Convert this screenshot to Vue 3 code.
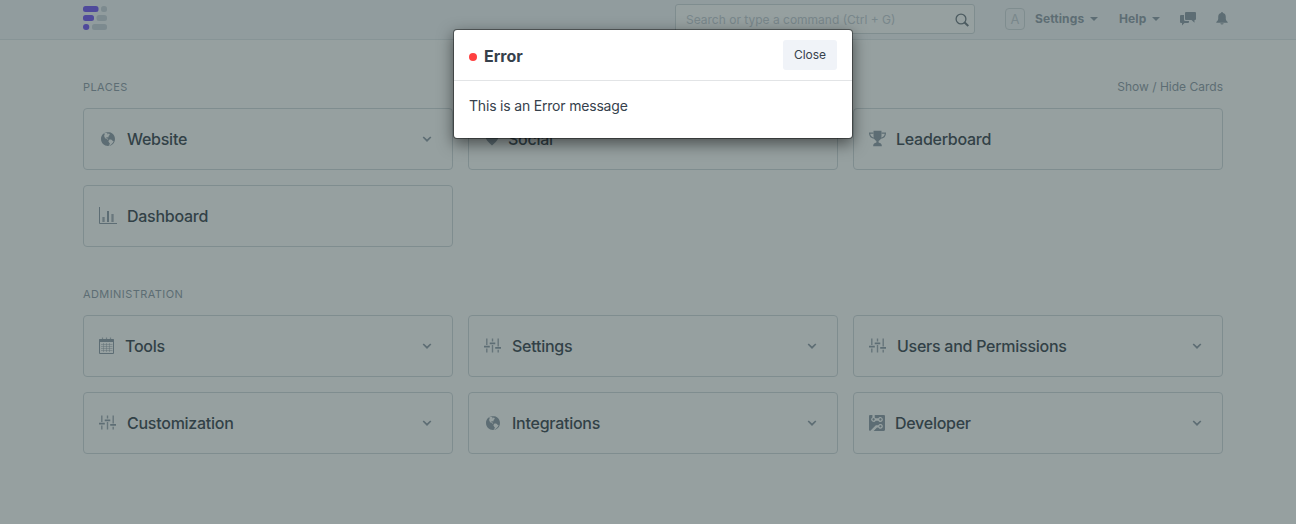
<script setup>
import { h } from 'vue'

const p = (d, extra = {}) => h('path', { d, ...extra })
const line = (d, w, o = 1) => p(d, { fill: 'none', stroke: 'currentColor', 'stroke-width': w, 'stroke-opacity': o })

const globe = 'M7 1C3.14 1 0 4.14 0 8s3.14 7 7 7c.48 0 .94-.05 1.38-.14-.17-.08-.2-.73-.02-1.09.19-.41.81-1.45.2-1.8-.61-.35-.44-.5-.81-.91-.37-.41-.22-.47-.25-.58-.08-.34.36-.89.39-.94.02-.06.02-.27 0-.33 0-.08-.27-.22-.34-.23-.06 0-.11.11-.2.13-.09.02-.5-.25-.59-.33-.09-.08-.14-.23-.27-.34-.13-.13-.14-.03-.33-.11s-.8-.31-1.28-.48c-.48-.19-.52-.47-.52-.66-.02-.2-.3-.47-.42-.67-.14-.2-.16-.47-.2-.41-.04.06.25.78.2.81-.05.02-.16-.2-.3-.38-.14-.19.14-.09-.3-.95s.14-1.3.17-1.75c.03-.45.38.17.19-.13-.19-.3 0-.89-.14-1.11-.13-.22-.88.25-.88.25.02-.22.69-.58 1.16-.92.47-.34.78-.06 1.16.05.39.13.41.09.28-.05-.13-.13.06-.17.36-.13.28.05.38.41.83.36.47-.03.05.09.11.22s-.06.11-.38.3c-.3.2.02.22.55.61s.38-.25.31-.55c-.07-.3.39-.06.39-.06.33.22.27.02.5.08.23.06.91.64.91.64-.83.44-.31.48-.17.59.14.11-.28.3-.28.3-.17-.17-.19.02-.3.08-.11.06-.02.22-.02.22-.56.09-.44.69-.42.83 0 .14-.38.36-.47.58-.09.2.25.64.06.66-.19.03-.34-.66-1.31-.41-.3.08-.94.41-.59 1.08.36.69.92-.19 1.11-.09.19.1-.06.53-.02.55.04.02.53.02.56.61.03.59.77.53.92.55.17 0 .7-.44.77-.45.06-.03.38-.28 1.03.09.66.36.98.31 1.2.47.22.16.08.47.28.58.2.11 1.06-.03 1.28.31.22.34-.88 2.09-1.22 2.28-.34.19-.48.64-.84.92s-.81.64-1.27.91c-.41.23-.47.66-.66.8 3.14-.7 5.48-3.5 5.48-6.84 0-3.86-3.14-7-7-7z'
const circuit = 'M3 5c0-.55.45-1 1-1s1 .45 1 1-.45 1-1 1-1-.45-1-1zm8 0c0-.55-.45-1-1-1s-1 .45-1 1 .45 1 1 1 1-.45 1-1zm0 6c0-.55-.45-1-1-1s-1 .45-1 1 .45 1 1 1 1-.45 1-1zm2-10H5v2.17c.36.19.64.47.83.83h2.34c.42-.78 1.33-1.28 2.34-1.05.75.19 1.36.8 1.53 1.55.31 1.38-.72 2.59-2.05 2.59-.8 0-1.48-.44-1.83-1.09H5.83c-.42.8-1.33 1.28-2.34 1.03-.73-.17-1.34-.78-1.52-1.52C1.72 4.49 2.2 3.59 3 3.17V1H1c-.55 0-1 .45-1 1v12c0 .55.45 1 1 1l5-5h2.17c.42-.78 1.33-1.28 2.34-1.05.75.19 1.36.8 1.53 1.55.31 1.38-.72 2.59-2.05 2.59-.8 0-1.48-.44-1.83-1.09H6.99L4 15h9c.55 0 1-.45 1-1V2c0-.55-.45-1-1-1z'

// Every glyph is drawn on an 18x18 grid.
const glyphs = {
  globe: () => h('g', { transform: 'translate(2 1)' }, [p(globe)]),
  circuit: () => h('g', { transform: 'translate(0 -.2) scale(1.143)' }, [p(circuit)]),
  heart: () => p('M8 15.5C4 12 1.5 9.5 1.5 6.5C1.5 2.5 6.5 2 8 5C9.5 2 14.5 2.5 14.5 6.5C14.5 9.5 12 12 8 15.5z'),
  trophy: () => [
    p('M4.5 .8H12.5V6C12.5 8.8 11 10.2 9.6 11V12.6C11.500 13 12.8 14 12.8 15.6V16.3H4.2V15.6C4.2 14 5.5 13 7.4 12.6V11C6 10.2 4.5 8.8 4.5 6z'),
    line('M4.5 3.1H.6C.6 6.5 2.4 8.1 5.8 8.4M12.5 3.1H16.4C16.4 6.5 14.6 8.1 11.2 8.4', 1.2)
  ],
  chart: () => [
    line('M.5 0V16.5H18', 1), line('M4.5 15V10M13.5 15V7', 2.3, 0.8), line('M9 15V4', 2)
  ],
  calendar: () => [
    line('M.5 2.5H14.5V16.5H.5z', 1),
    p('M.5 2H14.5V5H.5z'),
    line('M3.5 .5V3.3M7.5 .5V3.3M11.5 .5V3.3', 1.2, 0.7),
    line('M2 7.5H13.5M2 9.5H13.5M2 11.5H13.5M2 13.5H13.5', 1, 0.45),
    line('M4.5 6V15M7.5 6V15M10.5 6V15', 1, 0.45)
  ],
  sliders: () => [
    line('M2.8 1.5V8M2.8 11.5V15.5M8.5 1.5V4.5M8.5 8V15.5M14.2 1.5V9.5M14.2 12.8V15.5', 1.4, 0.85),
    line('M0 9.7H5.8M5.7 6.3H11.3M11.2 10.8H17', 1.7)
  ]
}

const Icon = (props) => h('svg', { viewBox: '0 0 18 18', width: 18, height: 18, fill: 'currentColor' }, glyphs[props.name]())
Icon.props = ['name']

const sections = [
  {
    title: 'Places',
    cards: [
      { label: 'Website', icon: 'globe', slot: 18, more: true },
      { label: 'Social', icon: 'heart', slot: 14 },
      { label: 'Leaderboard', icon: 'trophy', slot: 17 },
      { label: 'Dashboard', icon: 'chart', slot: 18 }
    ]
  },
  {
    title: 'Administration',
    cards: [
      { label: 'Tools', icon: 'calendar', slot: 16, more: true },
      { label: 'Settings', icon: 'sliders', slot: 18, more: true },
      { label: 'Users and Permissions', icon: 'sliders', slot: 18, more: true },
      { label: 'Customization', icon: 'sliders', slot: 18, more: true },
      { label: 'Integrations', icon: 'globe', slot: 18, more: true },
      { label: 'Developer', icon: 'circuit', slot: 16, more: true }
    ]
  }
]
</script>

<template>
  <div class="desk">
    <header class="navbar">
      <div class="container nav-inner">
        <svg class="logo" width="24" height="24" viewBox="0 0 24 24">
          <g fill="#7052f5">
            <rect width="15.5" height="6" rx="2.5" />
            <rect y="9" width="11" height="6" rx="2.5" />
            <rect y="18" width="6.3" height="6" rx="3" />
          </g>
          <g fill="#cbd3dc">
            <rect x="18" width="6" height="6" rx="2.5" />
            <rect x="13.5" y="9" width="10.5" height="6" rx="2.5" />
            <rect x="9" y="18" width="15" height="6" rx="2.5" />
          </g>
        </svg>
        <div class="search">
          <span>Search or type a command (Ctrl + G)</span>
          <svg width="15" height="15" viewBox="0 0 15 15" fill="none" stroke="#6c7680">
            <circle cx="6" cy="6" r="4.9" stroke-width="1.3" />
            <path d="M9.6 9.6L13.3 13" stroke-width="2" />
          </svg>
        </div>
        <span class="avatar">A</span>
        <span class="menu settings">Settings<i class="caret"></i></span>
        <span class="menu help">Help<i class="caret"></i></span>
        <svg class="chat" width="16" height="15" viewBox="0 0 16 15" fill="currentColor">
          <path d="M6 0h9q1 0 1 1v6q0 1-1 1h-.5v2.800L11.500 8H6Q5 8 5 7V1q0-1 1-1z" />
          <path d="M1 3h3v4.500Q4 9 5.500 9H9v1q0 1-1 1H4.500L2 13.500V11H1q-1 0-1-1V4q0-1 1-1z" />
        </svg>
        <svg class="bell" width="12" height="13" viewBox="0 0 12 13" fill="currentColor">
          <path d="M6 0Q7 0 7 1Q9.800 1.700 9.800 5V7Q9.800 8.500 11.700 10V10.700H.3V10Q2.200 8.500 2.200 7V5Q2.200 1.700 5 1Q5 0 6 0zM4.300 11.200H7.700Q7.500 12.500 6 12.500Q4.500 12.500 4.300 11.200z" />
        </svg>
      </div>
    </header>

    <main class="container content">
      <section v-for="(section, i) in sections" :key="section.title" class="section">
        <div class="section-head">
          <h2>{{ section.title }}</h2>
          <span v-if="i === 0">Show / Hide Cards</span>
        </div>
        <div class="grid">
          <div v-for="card in section.cards" :key="card.label" class="card">
            <span class="slot" :style="{ width: card.slot + 'px' }"><Icon :name="card.icon" /></span>
            <span class="label">{{ card.label }}</span>
            <svg v-if="card.more" class="chevron" width="10" height="8" viewBox="0 0 10 8">
              <path d="M1.200 2L5 5.700L8.800 2" fill="none" stroke="currentColor" stroke-width="1.700" />
            </svg>
          </div>
        </div>
      </section>
    </main>

    <div class="backdrop"></div>
    <div class="modal">
      <div class="modal-head">
        <i class="dot"></i>
        <strong>Error</strong>
        <button type="button">Close</button>
      </div>
      <p>This is an Error message</p>
    </div>
  </div>
</template>

<style>
body { margin: 0; }
</style>

<style scoped>
.desk {
  position: relative;
  height: 524px;
  overflow: hidden;
  background: #fff;
  color: #36414c;
  font-family: Inter, "Liberation Sans", sans-serif;
}
.container { width: 1140px; margin: 0 0 0 83px; }
.navbar {
  box-sizing: border-box;
  height: 40px;
  background: #f5f7fa;
  border-bottom: 1px solid #e1e7eb;
}
.nav-inner {
  display: flex;
  align-items: flex-start;
  color: #8d99a6;
}
.nav-inner > * { flex-shrink: 0; }
.logo { margin-top: 6px; }
.search {
  box-sizing: border-box;
  display: flex;
  align-items: center;
  justify-content: space-between;
  width: 300px;
  height: 30px;
  margin: 4px 0 0 568px;
  padding: 0 4px 0 10px;
  border: 1px solid #d1d8dd;
  border-radius: 3px;
  background: #fff;
  color: #c4ccd4;
  font-size: 12px;
}
.search svg { margin-top: 2px; }
.avatar {
  box-sizing: border-box;
  width: 20px;
  height: 22px;
  margin: 8px 0 0 30px;
  border: 1px solid #d1d8dd;
  border-radius: 4px;
  font-size: 13px;
  line-height: 21px;
  text-align: center;
  color: #c5cdd5;
}
.menu {
  display: flex;
  align-items: center;
  margin-top: 11px;
  font-size: 12px;
  line-height: 16px;
  font-weight: 700;
}
.settings { margin-left: 10px; width: 84px; letter-spacing: 0.1px; }
.help { width: 61px; letter-spacing: 0.1px; }
.caret {
  margin-left: 6px;
  border: 4px solid transparent;
  border-top-color: currentColor;
  border-bottom: 0;
}
.chat { margin-top: 12px; }
.bell { margin: 12px 0 0 20px; }
.section { padding-top: 36px; }
.section-head {
  display: flex;
  align-items: center;
  justify-content: space-between;
  height: 21px;
  margin-bottom: 11px;
  color: #8d99a6;
  font-size: 12px;
}
h2 {
  margin: 0;
  font-size: 11px;
  font-weight: 400;
  letter-spacing: 0.42px;
  text-transform: uppercase;
}
.grid {
  display: grid;
  grid-template-columns: repeat(3, 370px);
  gap: 15px;
}
.card {
  box-sizing: border-box;
  display: flex;
  align-items: center;
  height: 62px;
  padding: 0 20px 0 15px;
  border: 1px solid #d1d8dd;
  border-radius: 4px;
  font-size: 16px;
  font-weight: 500;
  letter-spacing: -0.26px;
}
.slot { margin-right: 10px; height: 18px; color: #8d99a6; }
.slot svg { display: block; overflow: visible; }
.chevron { margin-left: auto; color: #8d99a6; }
.backdrop {
  position: absolute;
  inset: 0;
  background: #2e4141;
  opacity: 0.5;
}
.modal {
  position: absolute;
  top: 29px;
  left: 453px;
  box-sizing: border-box;
  width: 400px;
  height: 110px;
  border: 1px solid rgba(0, 0, 0, 0.4);
  border-radius: 4px;
  background: #fff;
  background-clip: padding-box;
  box-shadow: 0 5px 15px rgba(0, 0, 0, 0.5);
}
.modal-head {
  box-sizing: border-box;
  display: flex;
  align-items: center;
  height: 51px;
  padding: 0 15px;
  border-bottom: 1px solid #e2e4e6;
}
.dot {
  width: 8px;
  height: 8px;
  margin: 3px 7px 0 0;
  border-radius: 50%;
  background: #ff4040;
}
strong { font-size: 16px; line-height: 20px; margin-top: 2px; }
button {
  width: 54px;
  height: 30px;
  margin-left: auto;
  padding: 0;
  border: 0;
  border-radius: 3px;
  background: #f0f3f8;
  color: #36414c;
  font: 12px/18px Inter, "Liberation Sans", sans-serif;
}
p { margin: 15px; font-size: 14px; line-height: 20px; letter-spacing: -0.19px; }
</style>
